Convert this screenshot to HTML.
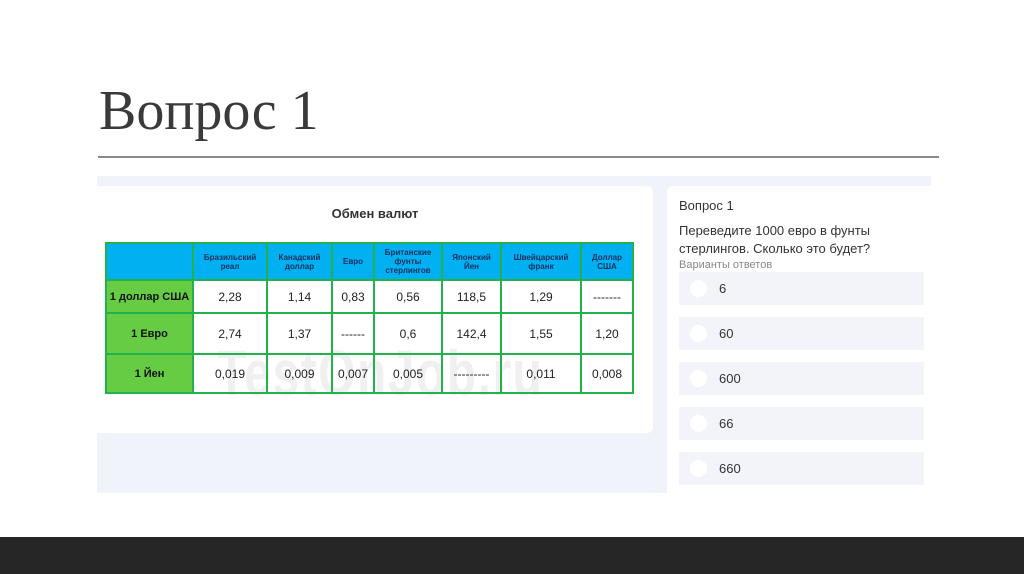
<!DOCTYPE html>
<html><head><meta charset="utf-8"><style>
*{margin:0;padding:0;box-sizing:border-box}
body{width:1024px;height:574px;background:#fff;position:relative;overflow:hidden;font-family:"Liberation Sans",sans-serif}
.t{position:absolute;left:99px;top:80px;font-family:"Liberation Serif",serif;font-size:56px;color:#3a3a3a;line-height:62px}
.hr{position:absolute;left:98px;top:156px;width:841px;height:2px;background:#8a8a8a}
.bg{position:absolute;left:97px;top:176px;width:834px;height:317px;background:#f0f3f9}
.lc{position:absolute;left:97px;top:186px;width:556px;height:247px;background:#fff;border-radius:0 6px 6px 0}
.rc{position:absolute;left:667px;top:186px;width:264px;height:307px;background:#fff;border-radius:6px 0 0 0}
.cap{position:absolute;left:0;width:556px;top:20px;text-align:center;font-weight:bold;font-size:13px;color:#333}
table{position:absolute;left:8px;top:56px;border-collapse:collapse;font-family:"Liberation Sans",sans-serif}
td{border:2px solid #22b14c;text-align:center;font-size:12px;color:#222;padding:0}
tr.h td{background:#00b0f0;font-size:8px;font-weight:bold;color:#1a3060;height:37px}
td.g{background:#66cc44;font-weight:bold;font-size:11px;color:#111}
.wm{position:absolute;left:120px;top:150px;font-size:64px;font-weight:bold;color:#f0f0f0;transform:scaleX(0.75);transform-origin:left top;letter-spacing:2px}
.q1{position:absolute;left:679px;top:198px;font-size:13px;color:#333}
.q2{position:absolute;left:679px;top:222px;font-size:13px;color:#333;line-height:18px}
.q3{position:absolute;left:679px;top:259px;font-size:11px;color:#888}
.o{position:absolute;left:679px;width:245px;height:33px;background:#f2f4fa;font-size:13px;color:#333}
.o i{position:absolute;left:11px;top:8px;width:17px;height:17px;border-radius:50%;background:#fff}
.o span{position:absolute;left:40px;top:9px}
.ft{position:absolute;left:0;top:537px;width:1024px;height:37px;background:#262626}
</style></head><body>
<div class="t">Вопрос 1</div>
<div class="hr"></div>
<div class="bg"></div>
<div class="lc">
<div class="cap">Обмен валют</div>
<div class="wm">TestOnJob.ru</div>
<table>
<colgroup><col style="width:87px"><col style="width:74px"><col style="width:65px"><col style="width:42px"><col style="width:68px"><col style="width:59px"><col style="width:80px"><col style="width:52px"></colgroup>
<tr class="h"><td></td><td>Бразильский<br>реал</td><td>Канадский<br>доллар</td><td>Евро</td><td>Британские<br>фунты<br>стерлингов</td><td>Японский<br>Йен</td><td>Швейцарский<br>франк</td><td>Доллар<br>США</td></tr>
<tr style="height:33px"><td class="g">1 доллар США</td><td>2,28</td><td>1,14</td><td>0,83</td><td>0,56</td><td>118,5</td><td>1,29</td><td>-------</td></tr>
<tr style="height:41px"><td class="g">1 Евро</td><td>2,74</td><td>1,37</td><td>------</td><td>0,6</td><td>142,4</td><td>1,55</td><td>1,20</td></tr>
<tr style="height:39px"><td class="g">1 Йен</td><td>0,019</td><td>0,009</td><td>0,007</td><td>0,005</td><td>---------</td><td>0,011</td><td>0,008</td></tr>
</table>
</div>
<div class="rc"></div>
<div class="q1">Вопрос 1</div>
<div class="q2">Переведите 1000 евро в фунты<br>стерлингов. Сколько это будет?</div>
<div class="q3">Варианты ответов</div>
<div class="o" style="top:272px"><i></i><span>6</span></div>
<div class="o" style="top:317px"><i></i><span>60</span></div>
<div class="o" style="top:362px"><i></i><span>600</span></div>
<div class="o" style="top:407px"><i></i><span>66</span></div>
<div class="o" style="top:452px"><i></i><span>660</span></div>
<div class="ft"></div>
</body></html>
